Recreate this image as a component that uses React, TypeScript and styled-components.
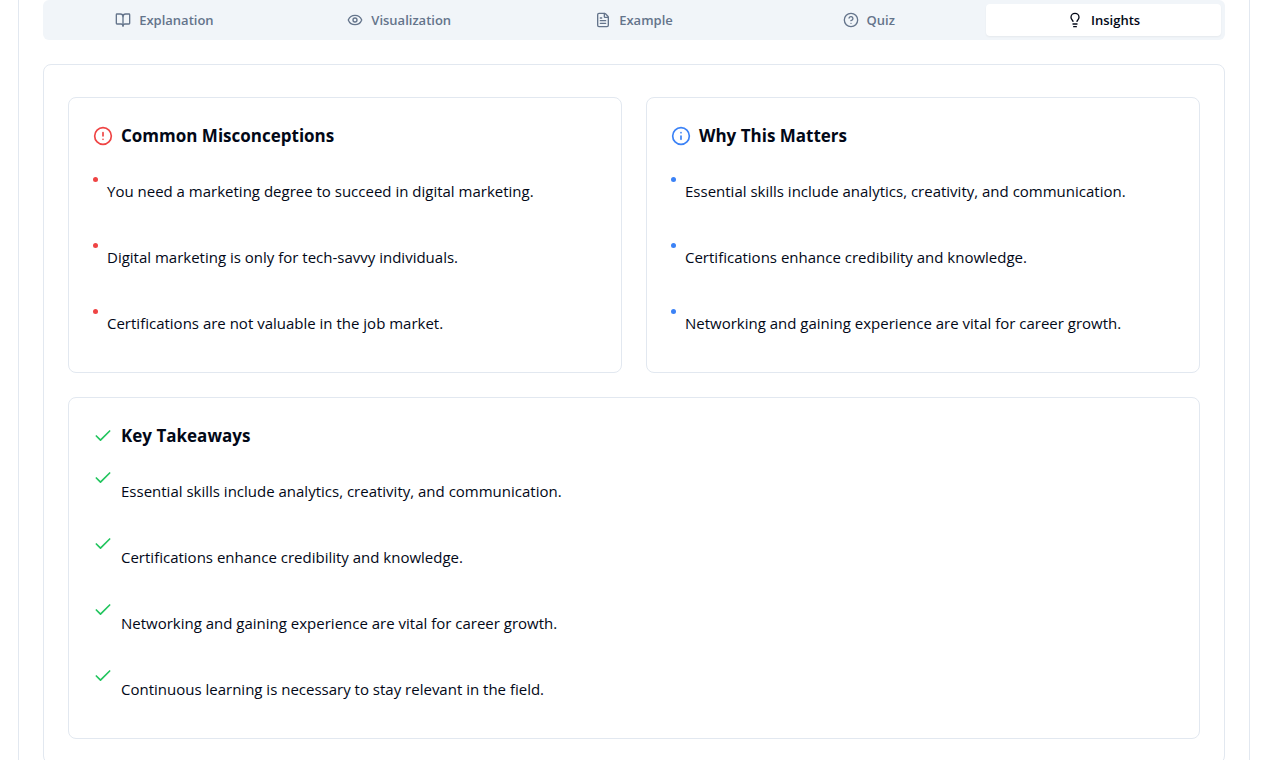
import React from "react";
import styled, { createGlobalStyle } from "styled-components";
import {
  BookOpen,
  Check,
  CircleAlert,
  CircleHelp,
  Eye,
  FileText,
  Info,
  Lightbulb,
  type LucideIcon,
} from "lucide-react";

const colors = {
  text: "#020817",
  muted: "#64748b",
  track: "#f1f5f9",
  border: "#e2e8f0",
  red: "#ef4444",
  blue: "#3b82f6",
  green: "#22c55e",
};

const GlobalStyle = createGlobalStyle`
  *, *::before, *::after { box-sizing: border-box; }
  body {
    margin: 0;
    background: #fff;
    color: ${colors.text};
    font-family: "Segoe UI", "Open Sans", "Noto Sans", sans-serif;
    font-size: 15px;
    line-height: 24px;
  }
`;

const Page = styled.div`
  padding: 0 20px 0 18px;
`;

const Shell = styled.main`
  padding: 0 24px 24px;
  border: 1px solid ${colors.border};
  border-top: 0;
  border-radius: 0 0 8px 8px;
`;

const TabList = styled.div`
  display: grid;
  grid-template-columns: repeat(5, minmax(0, 1fr));
  height: 40px;
  padding: 4px;
  border-radius: 6px;
  background: ${colors.track};
`;

const Tab = styled.button<{ $active: boolean }>`
  display: flex;
  align-items: center;
  justify-content: center;
  gap: 8px;
  padding: 0 12px;
  border: 0;
  border-radius: 4px;
  background: ${(p) => (p.$active ? "#fff" : "transparent")};
  box-shadow: ${(p) => (p.$active ? "0 1px 2px rgba(0, 0, 0, 0.05)" : "none")};
  color: ${(p) => (p.$active ? colors.text : colors.muted)};
  font: inherit;
  font-size: 13px;
  font-weight: 600;
  line-height: 20px;
  cursor: pointer;
`;

const Panel = styled.section`
  display: grid;
  grid-template-columns: repeat(2, minmax(0, 1fr));
  gap: 24px;
  margin-top: 24px;
  padding: 32px 24px 24px;
  border: 1px solid ${colors.border};
  border-radius: 8px;
`;

const Card = styled.article<{ $wide?: boolean }>`
  grid-column: ${(p) => (p.$wide ? "1 / -1" : "auto")};
  padding: 24px;
  border: 1px solid ${colors.border};
  border-radius: 8px;
`;

const CardTitle = styled.h3`
  display: flex;
  align-items: center;
  gap: 8px;
  margin: 0 0 16px;
  font-size: 17px;
  font-weight: 700;
  line-height: 28px;
`;

const List = styled.ul`
  display: flex;
  flex-direction: column;
  gap: 16px;
  margin: 0;
  padding: 0;
  list-style: none;
`;

const Item = styled.li`
  display: flex;
  align-items: flex-start;
  gap: 8px;
`;

const Bullet = styled.span<{ $color: string }>`
  flex: none;
  width: 5px;
  height: 5px;
  margin: 11px 1px 0 0;
  border-radius: 50%;
  background: ${(p) => p.$color};
`;

const ItemCheck = styled(Check)`
  flex: none;
  margin-top: 2px;
`;

const ItemText = styled.p`
  margin: 0;
  padding: 13px 0;
`;

const tabs: { label: string; icon: LucideIcon }[] = [
  { label: "Explanation", icon: BookOpen },
  { label: "Visualization", icon: Eye },
  { label: "Example", icon: FileText },
  { label: "Quiz", icon: CircleHelp },
  { label: "Insights", icon: Lightbulb },
];

const misconceptions = [
  "You need a marketing degree to succeed in digital marketing.",
  "Digital marketing is only for tech-savvy individuals.",
  "Certifications are not valuable in the job market.",
];

const reasons = [
  "Essential skills include analytics, creativity, and communication.",
  "Certifications enhance credibility and knowledge.",
  "Networking and gaining experience are vital for career growth.",
];

const takeaways = [
  ...reasons,
  "Continuous learning is necessary to stay relevant in the field.",
];

type InsightCardProps = {
  title: string;
  icon: LucideIcon;
  color: string;
  items: string[];
  checked?: boolean;
};

function InsightCard({ title, icon: Icon, color, items, checked }: InsightCardProps) {
  return (
    <Card $wide={checked}>
      <CardTitle>
        <Icon size={20} color={color} aria-hidden />
        {title}
      </CardTitle>
      <List>
        {items.map((item) => (
          <Item key={item}>
            {checked ? (
              <ItemCheck size={20} color={color} aria-hidden />
            ) : (
              <Bullet $color={color} aria-hidden />
            )}
            <ItemText>{item}</ItemText>
          </Item>
        ))}
      </List>
    </Card>
  );
}

export default function App() {
  const [active, setActive] = React.useState("Insights");
  return (
    <>
      <GlobalStyle />
      <Page>
        <Shell>
          <TabList role="tablist">
            {tabs.map(({ label, icon: Icon }) => (
              <Tab
                key={label}
                type="button"
                role="tab"
                aria-selected={active === label}
                $active={active === label}
                onClick={() => setActive(label)}
              >
                <Icon size={16} aria-hidden />
                {label}
              </Tab>
            ))}
          </TabList>
          <Panel role="tabpanel" aria-label="Insights">
            <InsightCard
              title="Common Misconceptions"
              icon={CircleAlert}
              color={colors.red}
              items={misconceptions}
            />
            <InsightCard
              title="Why This Matters"
              icon={Info}
              color={colors.blue}
              items={reasons}
            />
            <InsightCard
              title="Key Takeaways"
              icon={Check}
              color={colors.green}
              items={takeaways}
              checked
            />
          </Panel>
        </Shell>
      </Page>
    </>
  );
}
